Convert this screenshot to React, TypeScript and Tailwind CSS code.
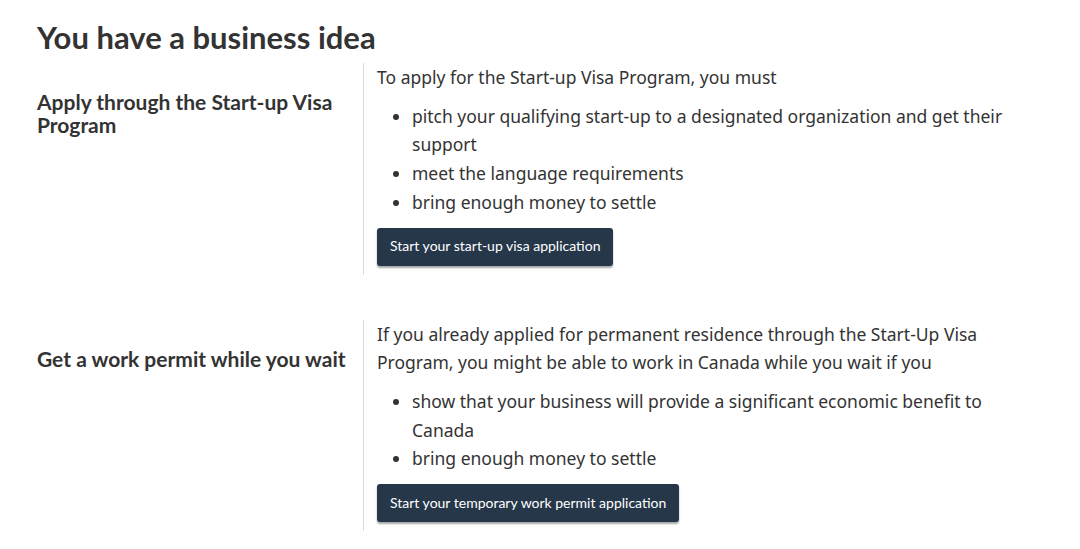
import React from "react";

function Section({
  title,
  intro,
  items,
  button,
  className = "",
}: {
  title: string;
  intro: string;
  items: string[];
  button: string;
  className?: string;
}) {
  return (
    <section className={`flex ${className}`}>
      <div className="w-[326px] shrink-0 pr-[10px] pt-[27px]">
        <h3 className="font-['Lato',sans-serif] font-bold text-[21px] leading-[23px] text-[#333]">
          {title}
        </h3>
      </div>
      <div className="border-l border-[#dcdcdc] pl-[13px] pb-[9px] w-[650px] font-['Noto_Sans',sans-serif] text-[17.5px] leading-[28.7px] text-[#333]">
        <p>{intro}</p>
        <ul className="list-disc pl-[35px] mt-[10px]">
          {items.map((it) => (
            <li key={it}>{it}</li>
          ))}
        </ul>
        <button className="mt-[11px] h-[38px] px-[13px] rounded-[3px] bg-[#26374a] text-white font-['Lato',sans-serif] text-[14px] shadow-[0_2px_2px_rgba(0,0,0,0.35)]">
          {button}
        </button>
      </div>
    </section>
  );
}

export default function App() {
  return (
    <div className="w-[1080px] h-[549px] bg-white pl-[37px] pt-[16px] overflow-hidden">
      <h2 className="font-['Lato',sans-serif] font-bold text-[31px] leading-[42px] text-[#333]">
        You have a business idea
      </h2>
      <Section
        className="mt-[5px]"
        title="Apply through the Start-up Visa Program"
        intro="To apply for the Start-up Visa Program, you must"
        items={[
          "pitch your qualifying start-up to a designated organization and get their support",
          "meet the language requirements",
          "bring enough money to settle",
        ]}
        button="Start your start-up visa application"
      />
      <Section
        className="mt-[45px]"
        title="Get a work permit while you wait"
        intro="If you already applied for permanent residence through the Start-Up Visa Program, you might be able to work in Canada while you wait if you"
        items={[
          "show that your business will provide a significant economic benefit to Canada",
          "bring enough money to settle",
        ]}
        button="Start your temporary work permit application"
      />
    </div>
  );
}
